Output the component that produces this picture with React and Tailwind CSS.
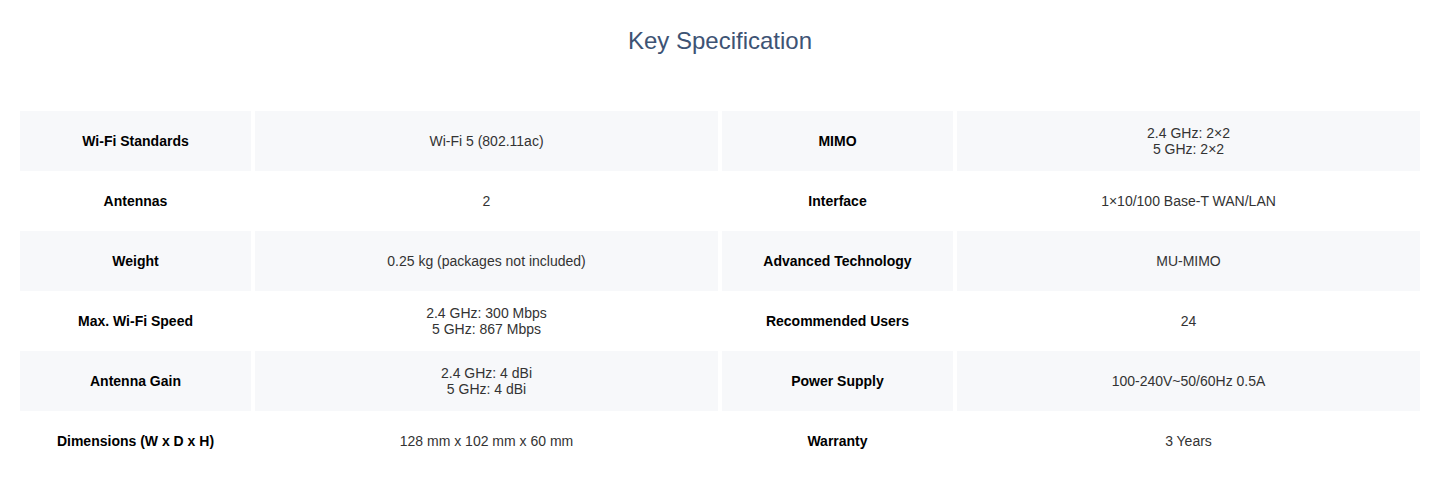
const specs = [
  ['Wi-Fi Standards', ['Wi-Fi 5 (802.11ac)'], 'MIMO', ['2.4 GHz: 2×2', '5 GHz: 2×2']],
  ['Antennas', ['2'], 'Interface', ['1×10/100 Base-T WAN/LAN']],
  ['Weight', ['0.25 kg (packages not included)'], 'Advanced Technology', ['MU-MIMO']],
  ['Max. Wi-Fi Speed', ['2.4 GHz: 300 Mbps', '5 GHz: 867 Mbps'], 'Recommended Users', ['24']],
  ['Antenna Gain', ['2.4 GHz: 4 dBi', '5 GHz: 4 dBi'], 'Power Supply', ['100-240V~50/60Hz 0.5A']],
  ['Dimensions (W x D x H)', ['128 mm x 102 mm x 60 mm'], 'Warranty', ['3 Years']],
];

function Label({ text, striped }) {
  return (
    <div className={`h-[60px] flex items-center justify-center text-center font-bold text-black ${striped ? 'bg-[#f7f8fa]' : ''}`}>
      {text}
    </div>
  );
}

function Value({ lines, striped }) {
  return (
    <div className={`h-[60px] flex flex-col items-center justify-center text-center text-[#333333] ${striped ? 'bg-[#f7f8fa]' : ''}`}>
      {lines.map((l) => (
        <span key={l}>{l}</span>
      ))}
    </div>
  );
}

export default function App() {
  return (
    <div className="w-[1440px] h-[480px] bg-white pt-[27px] px-5" style={{ fontFamily: '"Liberation Sans", Arial, sans-serif' }}>
      <h2 className="text-center text-[24px] leading-7 text-[#3d5374]">Key Specification</h2>

      <div className="mt-[56px] grid grid-cols-[231px_463px_231px_463px] gap-x-1 text-[14px] leading-4">
        {specs.map(([l1, v1, l2, v2], i) => {
          const striped = i % 2 === 0;
          return [
            <Label key={`a${i}`} text={l1} striped={striped} />,
            <Value key={`b${i}`} lines={v1} striped={striped} />,
            <Label key={`c${i}`} text={l2} striped={striped} />,
            <Value key={`d${i}`} lines={v2} striped={striped} />,
          ];
        })}
      </div>
    </div>
  );
}
